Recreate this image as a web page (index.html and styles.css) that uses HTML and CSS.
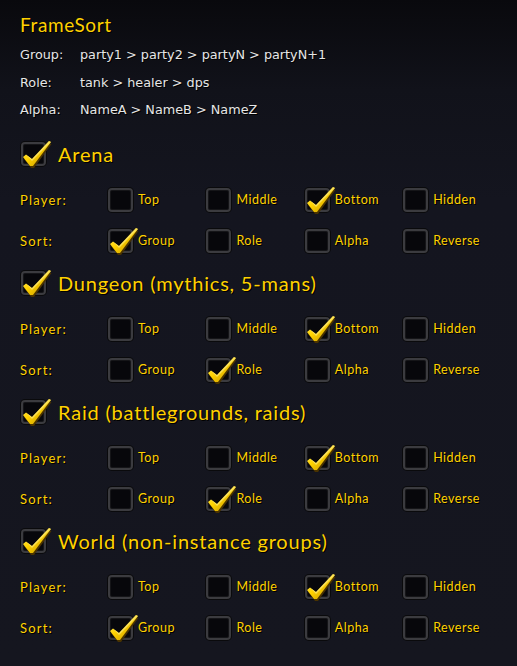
FILE: index.html
```html
<!DOCTYPE html>
<html>
<head>
<meta charset="utf-8">
<link rel="stylesheet" href="styles.css">
</head>
<body>
<div class="panel">
  <h1 class="title">FrameSort</h1>
  <div class="desc">
    <div class="desc-row"><span class="desc-key">Group:</span><span>party1 &gt; party2 &gt; partyN &gt; partyN+1</span></div>
    <div class="desc-row"><span class="desc-key">Role:</span><span>tank &gt; healer &gt; dps</span></div>
    <div class="desc-row"><span class="desc-key">Alpha:</span><span>NameA &gt; NameB &gt; NameZ</span></div>
  </div>

  <section class="section">
    <div class="heading"><span class="cb checked"><svg class="tick" viewBox="-4 -6 36 34"><use href="#tick"/></svg></span><span class="heading-text">Arena</span></div>
    <div class="row"><span class="row-label">Player:</span>
      <span class="opt"><span class="cb"></span>Top</span>
      <span class="opt"><span class="cb"></span>Middle</span>
      <span class="opt"><span class="cb checked"><svg class="tick" viewBox="-4 -6 36 34"><use href="#tick"/></svg></span>Bottom</span>
      <span class="opt"><span class="cb"></span>Hidden</span>
    </div>
    <div class="row"><span class="row-label">Sort:</span>
      <span class="opt"><span class="cb checked"><svg class="tick" viewBox="-4 -6 36 34"><use href="#tick"/></svg></span>Group</span>
      <span class="opt"><span class="cb"></span>Role</span>
      <span class="opt"><span class="cb"></span>Alpha</span>
      <span class="opt"><span class="cb"></span>Reverse</span>
    </div>
  </section>

  <section class="section">
    <div class="heading"><span class="cb checked"><svg class="tick" viewBox="-4 -6 36 34"><use href="#tick"/></svg></span><span class="heading-text">Dungeon (mythics, 5-mans)</span></div>
    <div class="row"><span class="row-label">Player:</span>
      <span class="opt"><span class="cb"></span>Top</span>
      <span class="opt"><span class="cb"></span>Middle</span>
      <span class="opt"><span class="cb checked"><svg class="tick" viewBox="-4 -6 36 34"><use href="#tick"/></svg></span>Bottom</span>
      <span class="opt"><span class="cb"></span>Hidden</span>
    </div>
    <div class="row"><span class="row-label">Sort:</span>
      <span class="opt"><span class="cb"></span>Group</span>
      <span class="opt"><span class="cb checked"><svg class="tick" viewBox="-4 -6 36 34"><use href="#tick"/></svg></span>Role</span>
      <span class="opt"><span class="cb"></span>Alpha</span>
      <span class="opt"><span class="cb"></span>Reverse</span>
    </div>
  </section>

  <section class="section">
    <div class="heading"><span class="cb checked"><svg class="tick" viewBox="-4 -6 36 34"><use href="#tick"/></svg></span><span class="heading-text">Raid (battlegrounds, raids)</span></div>
    <div class="row"><span class="row-label">Player:</span>
      <span class="opt"><span class="cb"></span>Top</span>
      <span class="opt"><span class="cb"></span>Middle</span>
      <span class="opt"><span class="cb checked"><svg class="tick" viewBox="-4 -6 36 34"><use href="#tick"/></svg></span>Bottom</span>
      <span class="opt"><span class="cb"></span>Hidden</span>
    </div>
    <div class="row"><span class="row-label">Sort:</span>
      <span class="opt"><span class="cb"></span>Group</span>
      <span class="opt"><span class="cb checked"><svg class="tick" viewBox="-4 -6 36 34"><use href="#tick"/></svg></span>Role</span>
      <span class="opt"><span class="cb"></span>Alpha</span>
      <span class="opt"><span class="cb"></span>Reverse</span>
    </div>
  </section>

  <section class="section">
    <div class="heading"><span class="cb checked"><svg class="tick" viewBox="-4 -6 36 34"><use href="#tick"/></svg></span><span class="heading-text">World (non-instance groups)</span></div>
    <div class="row"><span class="row-label">Player:</span>
      <span class="opt"><span class="cb"></span>Top</span>
      <span class="opt"><span class="cb"></span>Middle</span>
      <span class="opt"><span class="cb checked"><svg class="tick" viewBox="-4 -6 36 34"><use href="#tick"/></svg></span>Bottom</span>
      <span class="opt"><span class="cb"></span>Hidden</span>
    </div>
    <div class="row"><span class="row-label">Sort:</span>
      <span class="opt"><span class="cb checked"><svg class="tick" viewBox="-4 -6 36 34"><use href="#tick"/></svg></span>Group</span>
      <span class="opt"><span class="cb"></span>Role</span>
      <span class="opt"><span class="cb"></span>Alpha</span>
      <span class="opt"><span class="cb"></span>Reverse</span>
    </div>
  </section>
</div>

<svg width="0" height="0" class="defs">
  <defs>
    <linearGradient id="gold" x1="0" y1="0" x2="1" y2="1">
      <stop offset="0" stop-color="#fff27a"/>
      <stop offset="0.45" stop-color="#ffd200"/>
      <stop offset="1" stop-color="#b88a00"/>
    </linearGradient>
    <g id="tick">
      <polygon points="1,15 4,12.5 9,17 26,-1 28.5,0 11,24 8,24" fill="#4a3300"/>
      <polygon points="0,13 3,10.5 9,15 26,-3 28,-2 10,22 7,22" fill="url(#gold)"/>
      <polygon points="3,10.5 9,15 26,-3 28,-2 9,17" fill="#fff6a0" opacity="0.55"/>
    </g>
  </defs>
</svg>
</body>
</html>
```

FILE: styles.css
```css
html, body {
  margin: 0;
  padding: 0;
}
body {
  width: 517px;
  height: 666px;
  overflow: hidden;
  background: linear-gradient(180deg, #09090d 0px, #11121a 90px, #14151f 200px, #15161f 666px);
  font-family: "DejaVu Sans", sans-serif;
}
.panel {
  padding: 14px 0 0 20px;
}
.title {
  margin: 0;
  font-family: "Lato", sans-serif;
  font-weight: 400;
  font-size: 19px;
  letter-spacing: 0.6px;
  line-height: 22px;
  color: #ffd100;
  text-shadow: 1px 1px 0 #000;
}
.desc {
  margin-top: 5px;
  display: flex;
  flex-direction: column;
}
.desc-row {
  display: flex;
  height: 27.5px;
  align-items: center;
  font-family: "DejaVu Sans", sans-serif;
  font-size: 12.8px;
  color: #e6e6e6;
  text-shadow: 1px 1px 0 #000;
}
.desc-key {
  width: 60px;
}
.section {
  display: flex;
  flex-direction: column;
}
.desc + .section {
  margin-top: 18px;
}
.section + .section {
  margin-top: 18px;
}
.heading {
  display: flex;
  align-items: center;
  height: 24px;
  padding-left: 1px;
}
.heading-text {
  margin-left: 12px;
  font-family: "Lato", sans-serif;
  font-size: 20px;
  letter-spacing: 0.8px;
  color: #ffd100;
  text-shadow: 1px 1px 0 #000;
}
.row {
  display: grid;
  grid-template-columns: 88px repeat(4, 98.4px);
  align-items: center;
  height: 24px;
  margin-top: 22px;
  font-family: "Lato", sans-serif;
  font-size: 12.5px;
  letter-spacing: 0.5px;
  color: #ffd100;
  text-shadow: 1px 1px 0 #000;
}
.row + .row {
  margin-top: 17px;
}
.row-label {
  font-size: 13px;
  letter-spacing: 1.2px;
}
.opt {
  display: flex;
  align-items: center;
}
.opt .cb {
  margin-right: 5px;
}
.cb {
  position: relative;
  box-sizing: border-box;
  width: 25px;
  height: 24px;
  flex: none;
  border-radius: 4px;
  border: 2px solid #3b3b3f;
  background: #07070b;
  box-shadow: inset 0 0 0 1px #151518, 0 0 0 1px #0a0a0c;
}
.tick {
  position: absolute;
  left: -4px;
  top: -6px;
  width: 36px;
  height: 34px;
  overflow: visible;
}
.defs {
  position: absolute;
}
```
